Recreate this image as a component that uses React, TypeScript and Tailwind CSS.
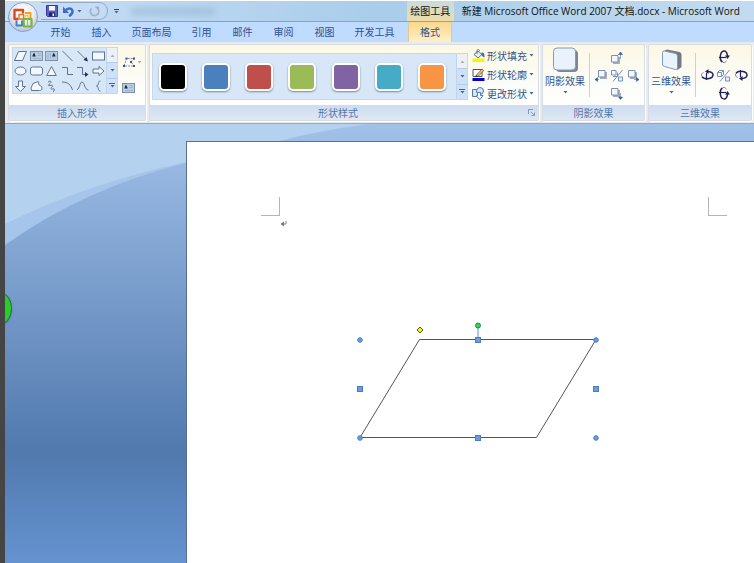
import React, { useState } from 'react';
import clsx from 'clsx';

const tabs = [
  { id: 'home', label: '开始', width: 'w-[41px]' },
  { id: 'insert', label: '插入', width: 'w-[41px]' },
  { id: 'layout', label: '页面布局', width: 'w-[59px]' },
  { id: 'references', label: '引用', width: 'w-[41px]' },
  { id: 'mailings', label: '邮件', width: 'w-[41px]' },
  { id: 'review', label: '审阅', width: 'w-[41px]' },
  { id: 'view', label: '视图', width: 'w-[41px]' },
  { id: 'developer', label: '开发工具', width: 'w-[59px]' },
];

const styleSwatches = [
  { name: '黑色', color: 'bg-black' },
  { name: '蓝色', color: 'bg-[#4a80bd]' },
  { name: '红色', color: 'bg-[#c04e4b]' },
  { name: '绿色', color: 'bg-[#9abb57]' },
  { name: '紫色', color: 'bg-[#8063a2]' },
  { name: '青色', color: 'bg-[#46abc6]' },
  { name: '橙色', color: 'bg-[#f79544]' },
];

const line = { fill: 'none', stroke: '#5d738f', strokeWidth: 1 };
const solid = { fill: '#f3f8fe', stroke: '#5d738f', strokeWidth: 1 };

const shapes: { name: string; art: React.ReactNode }[] = [
  { name: '平行四边形', art: <path d="M4.5 1.5h8l-4 9h-8z" {...solid} /> },
  {
    name: '文本框',
    art: (
      <>
        <rect x="0.5" y="1.5" width="12" height="9" fill="#b9cde2" stroke="#7d90a8" />
        <path d="M2.2 6.5L4 2.5l1.8 4z" fill="#1c2733" />
        <path d="M7.5 3.5H11M7.500 5.5H11M3 8.5h8" stroke="#9fb5cd" />
      </>
    ),
  },
  {
    name: '竖排文本框',
    art: (
      <>
        <rect x="0.5" y="1.5" width="12" height="9" fill="#b9cde2" stroke="#7d90a8" />
        <path d="M7 6.5l1.8-4 1.800 4z" fill="#1c2733" />
        <path d="M3 3v6M5.5 3v6M8.5 7.5V9" stroke="#9fb5cd" />
      </>
    ),
  },
  { name: '直线', art: <path d="M1.5 1l10 10" {...line} /> },
  {
    name: '箭头',
    art: (
      <>
        <path d="M1.5 1l9 9" {...line} />
        <path d="M12 11.5L7.5 10l3-3z" fill="#1d3557" />
      </>
    ),
  },
  { name: '矩形', art: <rect x="0.5" y="2" width="12" height="8" {...solid} /> },
  { name: '椭圆', art: <ellipse cx="6.5" cy="6" rx="5.5" ry="4" {...solid} /> },
  { name: '圆角矩形', art: <rect x="0.5" y="2" width="12" height="8" rx="2" {...solid} /> },
  { name: '三角形', art: <path d="M6.5 1.5l4.8 9H1.700z" {...solid} /> },
  { name: '肘形连接符', art: <path d="M1 2.5h5.5v7H12" {...line} /> },
  {
    name: '肘形箭头',
    art: (
      <>
        <path d="M1 2.5h5.5v7H10" {...line} />
        <path d="M12.5 9.5L9 7v5z" fill="#1d3557" />
      </>
    ),
  },
  { name: '右箭头', art: <path d="M1 4h6V1.5L12 6l-5 4.500V8H1z" {...solid} /> },
  { name: '下箭头', art: <path d="M4.5 1h4v5.5h3l-5 5-5-5h3z" {...solid} /> },
  { name: '任意多边形', art: <path d="M3 3.5l5-2c1.5 0 0 3 1 3.500s3 1 3 3-1 2.500-2.500 2.500h-8L1 8z" {...solid} /> },
  {
    name: '自由曲线',
    art: <path d="M3 2c3-2 4 0 2 1.500S3 6 5 5.500s4 0 2 1.500-1 2.500.5 2S10 9 9 11l-1 .5" {...line} />,
  },
  { name: '弧形', art: <path d="M1 2c6 0 9 3 10.500 8" {...line} /> },
  { name: '曲线', art: <path d="M1 9.500C4 9 3.500 2 6 2s2.500 8 6.500 8" {...line} /> },
  { name: '左大括号', art: <path d="M8.5 1C5 1 7.500 5.500 4.500 6 7.500 6.500 5 11 8.500 11" {...line} /> },
];

function Caret({ muted }: { muted?: boolean }) {
  return (
    <svg width="5" height="3" viewBox="0 0 5 3" className="shrink-0" aria-hidden="true">
      <path d="M0.5 0h4l-2 2.5z" fill={muted ? '#a4aebb' : '#45669a'} />
    </svg>
  );
}

// The three stacked buttons at the right edge of a gallery
function GalleryScroller() {
  return (
    <div className="flex w-[11px] shrink-0 flex-col divide-y divide-[#b5cce8] border-l border-[#c0d4ec]">
      <button aria-label="上一行" className="flex flex-1 items-center justify-center bg-[#edf0f4]">
        <svg width="5" height="3" viewBox="0 0 5 3"><path d="M0.5 3h4l-2-2.5z" fill="#a9b0ba" /></svg>
      </button>
      <button aria-label="下一行" className="flex flex-1 items-center justify-center bg-[#cfe1f7]">
        <Caret />
      </button>
      <button aria-label="其他" className="flex flex-1 flex-col items-center justify-center gap-px bg-[#cfe1f7]">
        <span className="h-px w-[6px] bg-[#45669a]" />
        <Caret />
      </button>
    </div>
  );
}

interface GroupProps {
  title: string;
  className?: string;
  launcher?: boolean;
  children: React.ReactNode;
}

function RibbonGroup({ title, className, launcher, children }: GroupProps) {
  return (
    <section
      aria-label={title}
      className={clsx(
        'flex flex-col rounded-[2px] border border-[#d7dde6] bg-linear-to-b from-[#fdf8e4] via-[#fcfcf8] to-white shadow-[1px_1px_0_#ffffff]',
        className
      )}
    >
      <div className="flex flex-1">{children}</div>
      <footer className="flex h-[15px] items-center bg-linear-to-b from-[#cddcf2] to-[#dfe7f3] text-[#5275a8]">
        <span className="flex-1 text-center">{title}</span>
        {launcher && (
          <button aria-label="设置自选图形格式" className="mr-[3px] pl-[2px]">
            <svg width="7" height="7" viewBox="0 0 7 7" fill="none" stroke="#7d9ac0">
              <path d="M0.5 5V0.5H5M3 3l3 3M6.5 3.5v3h-3" />
            </svg>
          </button>
        )}
      </footer>
    </section>
  );
}

function OfficeLogo() {
  return (
    <svg width="32" height="32" viewBox="0 0 32 32" aria-hidden="true">
      <defs>
        <radialGradient id="orb" cx="50%" cy="35%" r="65%">
          <stop offset="0" stopColor="#ffffff" />
          <stop offset="0.6" stopColor="#e9edf4" />
          <stop offset="1" stopColor="#b3c0d4" />
        </radialGradient>
      </defs>
      <circle cx="16" cy="16" r="14.5" fill="url(#orb)" stroke="#8b9fbb" />
      <g fill="none">
        <path d="M11.5 18H7.500V9H16v3.500" stroke="#dc4a1c" strokeWidth="2.4" strokeLinejoin="round" />
        <path d="M12 13.5h4.5V18H12z" stroke="#e8742c" strokeWidth="1.4" />
        <path d="M18 12h5.5v5" stroke="#f3a21b" strokeWidth="2" strokeLinejoin="round" />
        <path d="M18 14.5h3V18h-3z" stroke="#f7c247" strokeWidth="1.4" />
        <path d="M9.5 19.5v5H15v-5" stroke="#3f7fce" strokeWidth="2" strokeLinejoin="round" />
        <path d="M16.5 18h8v7.5h-7.500z" stroke="#7ab43a" strokeWidth="2.2" strokeLinejoin="round" />
        <path d="M20.5 18v7" stroke="#9ac95c" strokeWidth="1.2" />
      </g>
    </svg>
  );
}

function QuickAccess() {
  return (
    <div className="flex h-[18px] items-center rounded-r-full border border-l-0 border-[#8fa9c9] bg-[#c8dcf3]/60 pl-[5px] pr-[7px]">
      <button aria-label="保存" className="mr-[5px]">
        <svg width="12" height="12" viewBox="0 0 12 12">
          <path d="M0.5 0.5h11v11h-10l-1-1z" fill="#5b61c4" stroke="#34399a" />
          <path d="M3 1h6v4.5H3z" fill="#f5f8ff" />
          <path d="M3 7.5h6V11H3z" fill="#20245f" />
          <path d="M6.5 8.5H8V11H6.500z" fill="#fff" />
        </svg>
      </button>
      <button aria-label="撤消" className="mr-[3px]">
        <svg width="11" height="11" viewBox="0 0 11 11">
          <path d="M3 4C6 1.5 9.5 2.5 9.5 5.5c0 2-1.5 3.5-3.5 4.5" fill="none" stroke="#3f68cf" strokeWidth="2.4" />
          <path d="M0 0.5V7h6z" fill="#3f68cf" />
        </svg>
      </button>
      <button aria-label="撤消列表" className="mr-[7px]"><Caret /></button>
      <button aria-label="重复">
        <svg width="11" height="11" viewBox="0 0 11 11">
          <path d="M2.5 2.5a4.200 4.200 0 1 0 6.500.5" fill="none" stroke="#9fb0c6" strokeWidth="1.8" />
          <path d="M5.5 0.5H10V5z" fill="#9fb0c6" />
        </svg>
      </button>
    </div>
  );
}

function FillIcon() {
  return (
    <svg width="13" height="13" viewBox="0 0 13 13">
      <path d="M2 5.5L6 2l4 3.5L6 9z" fill="#e4ecf6" stroke="#56708f" />
      <path d="M5 5V2c0-2 2.5-2 2.500 0" fill="none" stroke="#56708f" />
      <path d="M9.5 3.500c3 0 3 2 3 5C11 8 9.500 7 9.500 5z" fill="#3a6cb4" />
      <path d="M0.5 9.5h12V13H0.500z" fill="#fbf500" />
    </svg>
  );
}

function OutlineIcon() {
  return (
    <svg width="13" height="13" viewBox="0 0 13 13">
      <path d="M1 1.5h9v7H1z" fill="#fff" stroke="#44566e" />
      <path d="M4 7.5L10 1l1.8 1.5L6 8.500z" fill="#edbd6b" stroke="#6b4a20" strokeWidth="0.7" />
      <path d="M4 7.3l2 1.2-2.600.6z" fill="#222" />
      <path d="M0.5 10h12v3H0.500z" fill="#0000d4" />
    </svg>
  );
}

function ChangeShapeIcon() {
  return (
    <svg width="13" height="13" viewBox="0 0 13 13" fill="#d7e6f8" stroke="#4a78b3">
      <path d="M0.5 2.5h5v7h-5z" />
      <circle cx="8" cy="4" r="3.5" />
      <path d="M5.5 5.5h3v3H11l-3 4-4-3.500h1.500z" fill="#fff" />
    </svg>
  );
}

const shapeCommands = [
  { label: '形状填充', icon: FillIcon },
  { label: '形状轮廓', icon: OutlineIcon },
  { label: '更改形状', icon: ChangeShapeIcon },
];

function ShadowNudge({ x, y, arrow }: { x: number; y: number; arrow: string }) {
  return (
    <svg width="13" height="13" viewBox="0 0 13 13">
      <path d={`M${x + 2} ${y + 2}h7v7h-7z`} fill="#a8aeb8" />
      <path d={`M${x + 0.5} ${y + 0.5}h6.5v6.5h-6.500z`} fill="#f4f8fd" stroke="#7d90ac" />
      <path d={arrow} fill="#2c5aa8" stroke="#2c5aa8" strokeWidth="0.5" />
    </svg>
  );
}

function Toggle({ cube }: { cube?: boolean }) {
  return (
    <svg width="14" height="13" viewBox="0 0 14 13" fill="none" stroke="#6f92c0">
      {cube ? (
        <path d="M0.5 3.5h4v4h-4zM0.500 3.500l2-2h4l-2 2M6.500 1.500v4l-2 2" />
      ) : (
        <path d="M1.5 1.5H6V6H1.500zM3 7.500h4.500v-4" />
      )}
      <path d="M12.5 1L3 12.5" />
      <path d="M8.5 8h4v4h-4z" fill="#e9f0f9" />
    </svg>
  );
}

// Curved arrow around an axis; the other directions are turned copies
function TiltIcon({ className }: { className?: string }) {
  return (
    <svg width="14" height="14" viewBox="0 0 14 14" fill="none" className={className}>
      <path d="M5.5 12C3.5 11 3 8 3.5 5S6 1 7.500 1s3 2.500 3 5.500" stroke="#22225f" strokeWidth="1.5" />
      <path d="M8 5.5h5L10.500 9z" fill="#22225f" />
      <path d="M2 7.5h7" stroke="#22225f" strokeWidth="1.2" />
      <path d="M6 12.5c1.5.3 3-.5 3.500-2" stroke="#8286ad" />
    </svg>
  );
}

function ShadowEffects() {
  return (
    <>
      <button className="flex w-[44px] flex-col items-center pt-[2px]">
        <svg width="27" height="26" viewBox="0 0 27 26">
          <rect x="4" y="3" width="22" height="22" rx="4" fill="#7e858f" />
          <rect x="1.5" y="1" width="22" height="22" rx="3.5" fill="#eaf2fc" stroke="#7d9cc5" />
        </svg>
        <span className="mt-[2px]">阴影效果</span>
        <span className="mt-[4px]"><Caret /></span>
      </button>
      <div className="my-[8px] ml-[2px] w-px bg-[#c3d2e6]" />
      <div className="grid flex-1 grid-cols-3 content-center justify-items-center gap-y-[5px] px-[2px]">
        <button aria-label="上移阴影" className="col-start-2"><ShadowNudge x={1} y={4} arrow="M10.5 8V3M8.5 3.5l2-2.500 2 2.500z" /></button>
        <button aria-label="左移阴影" className="col-start-1"><ShadowNudge x={4} y={1} arrow="M5 10.5H1M3.5 8.5L1 10.500l2.500 2z" /></button>
        <button aria-label="设置阴影"><Toggle /></button>
        <button aria-label="右移阴影"><ShadowNudge x={1} y={1} arrow="M7 10.5h5M9.5 8.5l2.500 2-2.500 2z" /></button>
        <button aria-label="下移阴影" className="col-start-2"><ShadowNudge x={1} y={1} arrow="M10.5 6v6M8.5 10l2 2.500 2-2.500z" /></button>
      </div>
    </>
  );
}

function ThreeDEffects() {
  return (
    <>
      <button className="flex w-[44px] flex-col items-center pt-[2px]">
        <svg width="27" height="26" viewBox="0 0 27 26">
          <path d="M6 4l3-1.5 12.5 2.5q2 .5 2 2.500v12.500l-4 3z" fill="#707985" />
          <path d="M6.5 4Q4.5 3.5 4.5 5.500V17q0 2 2 2.500l11 3q2 .5 2-1.500V9q0-2-2-2.500z" fill="#eaf2fc" stroke="#7d9cc5" />
        </svg>
        <span className="mt-[2px]">三维效果</span>
        <span className="mt-[4px]"><Caret /></span>
      </button>
      <div className="my-[8px] ml-[2px] w-px bg-[#c3d2e6]" />
      <div className="grid flex-1 grid-cols-3 content-center justify-items-center gap-y-[4px] px-[2px]">
        <button aria-label="上翘" className="col-start-2"><TiltIcon /></button>
        <button aria-label="左偏" className="col-start-1"><TiltIcon className="-scale-x-100 rotate-90" /></button>
        <button aria-label="设置三维效果"><Toggle cube /></button>
        <button aria-label="右偏"><TiltIcon className="rotate-90" /></button>
        <button aria-label="下俯" className="col-start-2"><TiltIcon className="-scale-y-100" /></button>
      </div>
    </>
  );
}

function Ribbon() {
  return (
    <div className="flex h-[82px] gap-[3px] border-b border-[#8da9cc] bg-[#e9ebea] pb-[2px] pl-[3px] pr-[2px] pt-[2px] text-[10px] leading-[12px] text-[#2f5291]">
      <RibbonGroup title="插入形状" className="w-[138px]">
        <div className="ml-[3px] mt-[2px] flex h-[47px] w-[106px] border border-[#c6d8ed] bg-[#d7e7f8]">
          <div className="grid flex-1 grid-cols-6 place-items-center">
            {shapes.map((shape) => (
              <button key={shape.name} aria-label={shape.name}>
                <svg width="13" height="12" viewBox="0 0 13 12">{shape.art}</svg>
              </button>
            ))}
          </div>
          <GalleryScroller />
        </div>
        <div className="ml-[4px] mt-[11px] flex flex-col gap-[14px]">
          <button aria-label="编辑形状" className="flex items-center gap-px">
            <svg width="14" height="12" viewBox="0 0 14 12">
              <path d="M2 10L4.5 2.500H12L9 6l3.500 4z" fill="none" stroke="#7d8ea6" strokeDasharray="2 1" />
              <path d="M3.5 1.5h2v2h-2zM11 1.500h2v2h-2zM1 9h2v2H1zM11 9h2v2h-2zM8 5h2v2H8z" fill="#3e5577" />
            </svg>
            <Caret muted />
          </button>
          <button aria-label="绘制文本框">
            <svg width="13" height="12" viewBox="0 0 13 12">{shapes[1].art}</svg>
          </button>
        </div>
      </RibbonGroup>

      <RibbonGroup title="形状样式" className="flex-1" launcher>
        <div className="ml-[2px] mt-[8px] flex h-[47px] flex-1 border border-[#c6d8ed] bg-[#d7e7f8]">
          <div className="flex flex-1 items-center justify-between pl-[6px] pr-[10px]">
            {styleSwatches.map((swatch) => (
              <button
                key={swatch.name}
                aria-label={swatch.name}
                className={clsx('size-[28px] rounded-[5px] border-2 border-white shadow-[0_1px_2px_#7b8797]', swatch.color)}
              />
            ))}
          </div>
          <GalleryScroller />
        </div>
        <div className="ml-[4px] mr-[4px] mt-px flex flex-col">
          {shapeCommands.map((command) => (
            <button key={command.label} className="flex h-[19px] items-center gap-[2px]">
              <command.icon />
              {command.label}
              <Caret />
            </button>
          ))}
        </div>
      </RibbonGroup>

      <RibbonGroup title="阴影效果" className="w-[103px]">
        <ShadowEffects />
      </RibbonGroup>

      <RibbonGroup title="三维效果" className="w-[104px]">
        <ThreeDEffects />
      </RibbonGroup>
    </div>
  );
}

const corners = [[10, 21], [246, 21], [10, 119], [246, 119]];
const sides = [[128, 21], [10, 70], [246, 70], [128, 119]];

function Parallelogram() {
  return (
    <svg width="256" height="130" viewBox="0 0 256 130" role="img" aria-label="平行四边形">
      <path d="M69.5 20.5H246L186.500 118.500H10z" fill="#fff" stroke="#555" />
      <path d="M128 8v10" stroke="#5b8fc9" />
      <circle cx="128" cy="6.5" r="2.5" fill="#2fd64a" stroke="#2a8a4a" />
      <path d="M70 8l3 3-3 3-3-3z" fill="#f7ee1e" stroke="#5e5a1e" />
      <g fill="#6a9ce0" stroke="#4a7cc0">
        {corners.map(([x, y]) => <circle key={`${x}-${y}`} cx={x} cy={y} r="2.3" />)}
        {sides.map(([x, y]) => <rect key={`${x}-${y}`} x={x - 2.5} y={y - 2.5} width="5" height="5" />)}
      </g>
    </svg>
  );
}

function DocumentArea() {
  return (
    <main className="relative flex flex-1 overflow-hidden bg-linear-to-b from-[#a2c1e9] via-[#5179ae] via-75% to-[#6593d0] pl-[181px] pt-[17px]">
      {/* Light sweep in the upper left of the backdrop */}
      <svg width="380" height="124" className="absolute left-0 top-0" aria-hidden="true">
        <path d="M0 0H367Q320 6 276 17L181 39Q80 64 0 121z" fill="#a6c5ea" />
        <path d="M0 0H362Q315 6 274 17L181 38Q80 60 0 100z" fill="#b5d1f0" />
      </svg>
      <div className="absolute -left-[14px] top-[169px] h-[31px] w-[21px] rounded-[50%] border border-[#2f6b4f] bg-[#23d023] shadow-sm" />
      <article className="relative flex-1 border-l border-t border-[#56708f] bg-white">
        <div className="flex items-start justify-between pl-[74px] pr-[27px] pt-[55px]">
          <div>
            <div className="size-[19px] border-b border-r border-[#b5b5b5]" />
            <svg width="7" height="6" viewBox="0 0 7 6" className="ml-[19px] mt-[5px]" aria-hidden="true">
              <path d="M6 0v3H3" fill="none" stroke="#888" />
              <path d="M4 0.5L0.5 3 4 5.500z" fill="#777" />
            </svg>
          </div>
          <div className="size-[19px] border-b border-l border-[#b5b5b5]" />
        </div>
        <div className="ml-[163px] mt-[92px]">
          <Parallelogram />
        </div>
      </article>
    </main>
  );
}

export default function App() {
  const [activeTab, setActiveTab] = useState('format');

  return (
    <div className="flex min-h-screen border-l-[5px] border-[#454545] font-['Open_Sans','Noto_Sans_CJK_SC',sans-serif]">
      <div className="flex min-w-0 flex-1 flex-col">
        <div className="relative">
          <header className="flex h-[22px] items-center border-b border-t border-b-[#86a3c4] border-t-white bg-linear-to-r from-[#c9dff5] via-[#a9cdea] to-[#c3dbf0] pl-[36px]">
            <QuickAccess />
            <button aria-label="自定义快速访问工具栏" className="ml-[6px] flex flex-col items-center gap-px">
              <span className="h-px w-[5px] bg-[#24406b]" />
              <Caret />
            </button>
            {/* Blurred desktop showing through the glass title bar */}
            <div className="ml-[12px] h-[7px] w-[84px] bg-[#7f9fc0]/40 blur-[3px]" />
            <div className="ml-auto flex h-full items-center text-[10px] text-[#111]">
              <span className="flex h-full w-[47px] items-center justify-center bg-linear-to-b from-[#c9dbe0] to-[#eedda6]">
                绘图工具
              </span>
              <h1 className="ml-[8px] mr-[14px] whitespace-nowrap">新建 Microsoft Office Word 2007 文档.docx - Microsoft Word</h1>
            </div>
          </header>

          <nav className="flex h-[20px] items-stretch bg-[#bfdbff] pl-[35px] text-[10px] text-[#2f5291]">
            {tabs.map((tab) => (
              <button key={tab.id} className={clsx('shrink-0', tab.width)} onClick={() => setActiveTab(tab.id)}>
                {tab.label}
              </button>
            ))}
            <button
              onClick={() => setActiveTab('format')}
              className={clsx(
                'ml-[4px] w-[44px] rounded-t-[3px] border-x border-[#e3c88a]',
                activeTab === 'format' && 'bg-linear-to-b from-[#fbd78c] to-[#fdf0c8]'
              )}
            >
              格式
            </button>
          </nav>

          <button aria-label="Office 按钮" className="absolute left-[2px] top-[1px]">
            <OfficeLogo />
          </button>
        </div>

        <Ribbon />
        <DocumentArea />
      </div>
    </div>
  );
}
